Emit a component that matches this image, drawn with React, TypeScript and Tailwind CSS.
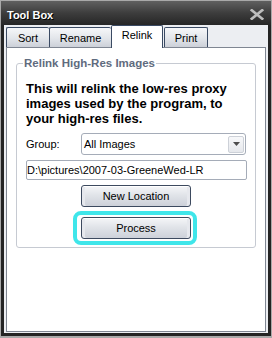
import React from "react";

function Tab({ label, w, last }: { label: string; w: string; last?: boolean }) {
  return (
    <div
      className={`${w} h-[20px] flex items-center justify-center pt-[1px] border-t border-l ${
        last ? "border-r" : ""
      } border-[#3a4a63] rounded-t-[2px] bg-[linear-gradient(to_bottom,#f6f7f9,#e2e5ea_55%,#ccd0d8)] text-[11px] leading-[13px] text-black`}
    >
      {label}
    </div>
  );
}

function XpButton({ label }: { label: string }) {
  return (
    <button
      type="button"
      className="w-[110px] h-[22px] flex items-center justify-center border border-[#3d4a5f] rounded-[3px] bg-[linear-gradient(to_bottom,#f5f6f8,#e1e4e9_45%,#cdd1d9)] shadow-[inset_0_1px_0_#ffffff,inset_3px_0_0_#e6e8ed,inset_-3px_0_0_#e6e8ed] text-[11px] leading-[13px] text-black"
    >
      {label}
    </button>
  );
}

export default function App() {
  return (
    <div className="w-[272px] h-[338px] flex flex-col border-x border-t border-b-2 border-[#a9a9a9] bg-[#242424] font-['Liberation_Sans',Arial,sans-serif] text-[11px] text-black">
      {/* Title bar */}
      <div className="h-[24px] shrink-0 flex items-start bg-[linear-gradient(to_bottom,#606060,#3d3d3d_50%,#262626)]">
        <span className="ml-[6px] mt-[9px] text-white font-bold text-[11px] leading-[11px] [text-shadow:1px_1px_0_#000]">
          Tool Box
        </span>
        <svg width="14" height="11" viewBox="0 0 14 11" className="ml-auto mr-[7px] mt-[8px]">
          <path d="M1.8 1.2 L12.2 9.8 M12.2 1.2 L1.8 9.8" stroke="#bdbdbd" strokeWidth="2.6" strokeLinecap="square" />
        </svg>
      </div>

      {/* Body frame */}
      <div className="flex-1 mx-[3px] mb-[3px] bg-[#eceef2] px-[2px] pb-[1px] flex flex-col">
        {/* Tabs */}
        <div className="h-[22px] shrink-0 flex items-end">
          <Tab label="Sort" w="w-[43px]" />
          <Tab label="Rename" w="w-[62px]" />
          <div className="relative z-10 w-[52px] h-[23px] -mb-px flex items-center justify-center pb-[4px] border-t border-x border-[#3a4a63] rounded-t-[2px] bg-white text-[11px] leading-[13px] text-black">
            Relink
          </div>
          <div className="w-px" />
          <Tab label="Print" w="w-[44px]" last />
        </div>

        {/* Panel */}
        <div className="flex-1 border border-[#7f8692] bg-white px-[9px] pt-[8px]">
          <fieldset className="border border-[#c6cad2] rounded-[3px] pb-[2px]">
            <legend className="ml-[6px] px-[1px] text-[11.5px] font-bold leading-[14px] text-[#5f6b7e]">
              Relink High-Res Images
            </legend>
            <div className="pl-[9px] pr-[8px] pt-[11px] flex flex-col">
              <p className="text-[13px] font-bold leading-[15px] text-black">
                This will relink the low-res proxy images used by the program, to your high-res files.
              </p>

              <div className="mt-[7px] flex items-center">
                <span className="w-[55px] text-[11px] leading-[13px]">Group:</span>
                <div className="w-[165px] h-[22px] flex items-center border border-[#a5acb8] rounded-[3px] bg-white pl-[2px]">
                  <span className="text-[11px] leading-[13px]">All Images</span>
                  <div className="ml-auto mr-[1px] w-[16px] h-[17px] flex items-center justify-center border border-[#cdd1d8] rounded-[2px] bg-[linear-gradient(to_bottom,#f7f8fa,#e6e8ec)]">
                    <svg width="7" height="4" viewBox="0 0 7 4">
                      <polygon points="0,0 7,0 3.5,4" fill="#4d4d4d" />
                    </svg>
                  </div>
                </div>
              </div>

              <div className="mt-[5px] h-[20px] flex items-center border border-[#a5acb8] rounded-[2px] bg-white">
                <span className="text-[11px] leading-[13px]">D:\pictures\2007-03-GreeneWed-LR</span>
              </div>

              <div className="mt-[5px] ml-[55px]">
                <XpButton label="New Location" />
              </div>

              <div className="mt-[4px] ml-[47px] w-fit border-[4px] border-[#3fe6ea] rounded-[8px] pl-[4px] pr-[2px] py-[2px]">
                <XpButton label="Process" />
              </div>
            </div>
          </fieldset>
        </div>
      </div>
    </div>
  );
}
